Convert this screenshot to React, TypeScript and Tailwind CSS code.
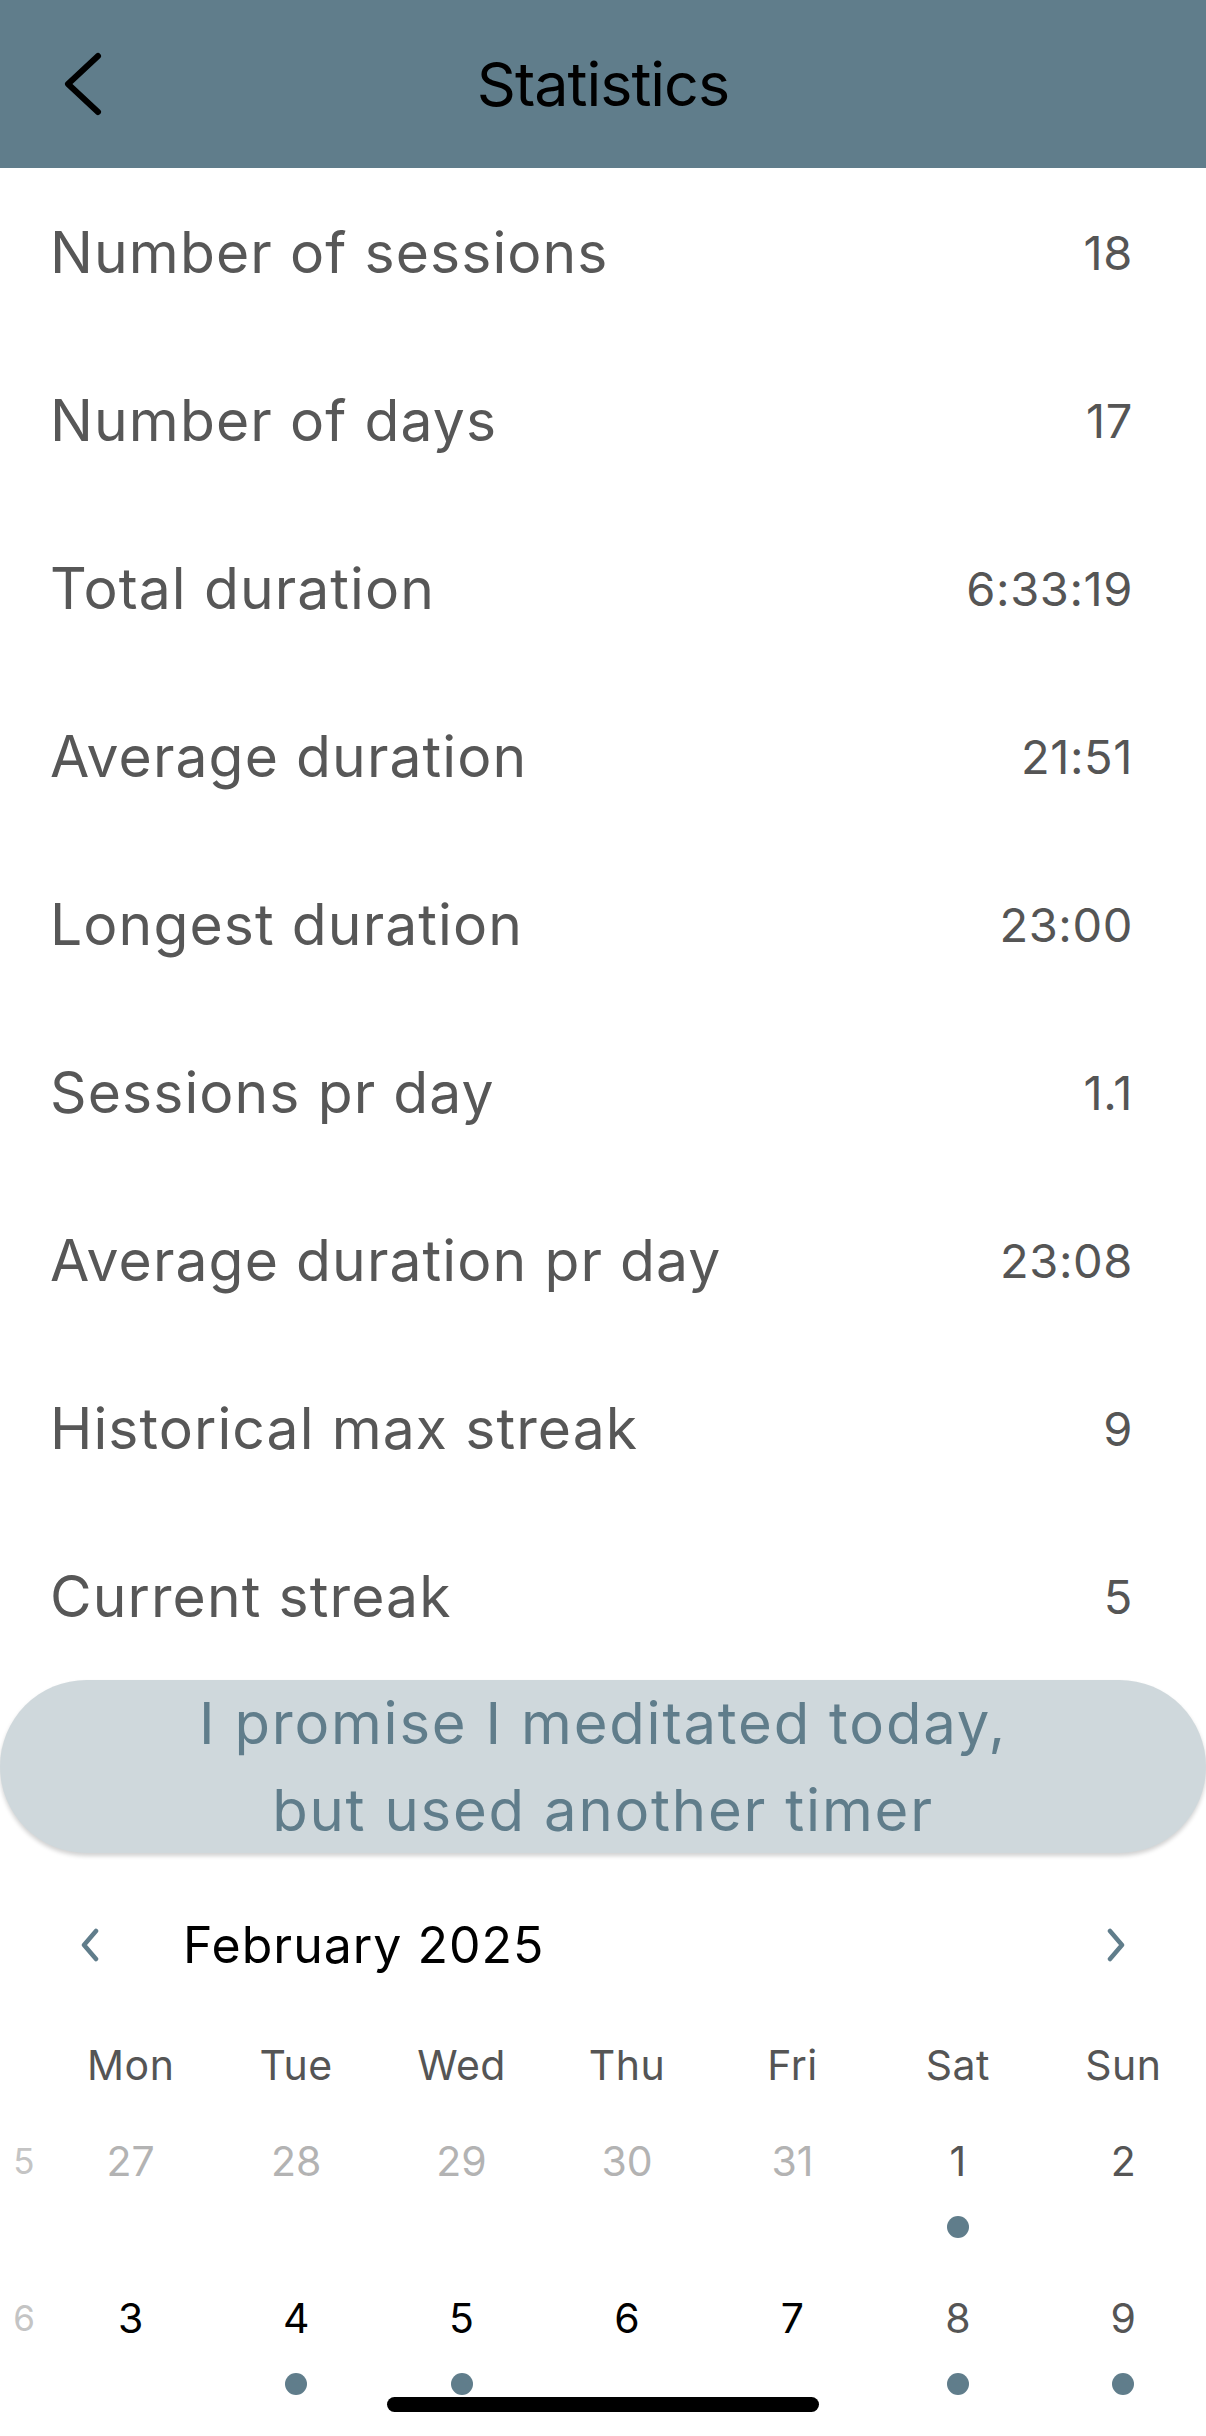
import React from "react";

const rows: [string, string][] = [
  ["Number of sessions", "18"],
  ["Number of days", "17"],
  ["Total duration", "6:33:19"],
  ["Average duration", "21:51"],
  ["Longest duration", "23:00"],
  ["Sessions pr day", "1.1"],
  ["Average duration pr day", "23:08"],
  ["Historical max streak", "9"],
  ["Current streak", "5"],
];

type Day = { n: string; tone: "muted" | "weekend" | "normal"; dot: boolean };

const weeks: { wk: string; days: Day[] }[] = [
  {
    wk: "5",
    days: [
      { n: "27", tone: "muted", dot: false },
      { n: "28", tone: "muted", dot: false },
      { n: "29", tone: "muted", dot: false },
      { n: "30", tone: "muted", dot: false },
      { n: "31", tone: "muted", dot: false },
      { n: "1", tone: "weekend", dot: true },
      { n: "2", tone: "weekend", dot: false },
    ],
  },
  {
    wk: "6",
    days: [
      { n: "3", tone: "normal", dot: false },
      { n: "4", tone: "normal", dot: true },
      { n: "5", tone: "normal", dot: true },
      { n: "6", tone: "normal", dot: false },
      { n: "7", tone: "normal", dot: false },
      { n: "8", tone: "weekend", dot: true },
      { n: "9", tone: "weekend", dot: true },
    ],
  },
];

const toneClass = {
  muted: "text-[#b3b3b3]",
  weekend: "text-[#555555]",
  normal: "text-black",
};

export default function App() {
  return (
    <div
      className="relative w-[1206px] h-[2436px] overflow-hidden bg-white"
      style={{ fontFamily: "Inter, 'Noto Sans', sans-serif" }}
    >
      {/* Header */}
      <div className="relative h-[168px] bg-[#607d8b] flex items-center justify-center">
        <svg
          className="absolute left-[62px] top-[50px]"
          width="42"
          height="68"
          viewBox="0 0 42 68"
          fill="none"
        >
          <polyline
            points="36,6 6,34 36,62"
            stroke="black"
            strokeWidth="6"
            strokeLinecap="round"
            strokeLinejoin="round"
          />
        </svg>
        <span className="text-[61px] leading-none text-black tracking-[-1px]">Statistics</span>
      </div>

      {/* Stats rows */}
      <div className="flex flex-col">
        {rows.map(([label, value]) => (
          <div key={label} className="h-[168px] flex items-center justify-between pl-[50px] pr-[73px]">
            <span className="text-[57px] leading-none text-[#575757] tracking-[1.1px]">{label}</span>
            <span className="text-[47px] leading-none text-[#555555] tracking-[0.6px]">{value}</span>
          </div>
        ))}
      </div>

      {/* Button */}
      <div className="h-[173px] rounded-full bg-[#cfd8dc] shadow-[0_3px_4px_rgba(0,0,0,0.18)] flex flex-col items-center justify-center">
        <span className="text-[58px] leading-[87px] text-[#607d8b] text-center tracking-[1.8px]">
          I promise I meditated today,
          <br />
          but used another timer
        </span>
      </div>

      {/* Calendar header */}
      <div className="mt-[32px] h-[120px] flex items-center">
        <svg className="ml-[78px]" width="24" height="34" viewBox="0 0 24 34" fill="none">
          <polyline points="18,3 6,17 18,31" stroke="#607d8b" strokeWidth="4.5" strokeLinecap="round" strokeLinejoin="round" />
        </svg>
        <span className="ml-[81px] text-[50px] leading-none text-black tracking-[1px]">February 2025</span>
        <div className="flex-1" />
        <svg className="mr-[78px]" width="24" height="34" viewBox="0 0 24 34" fill="none">
          <polyline points="6,3 18,17 6,31" stroke="#607d8b" strokeWidth="4.5" strokeLinecap="round" strokeLinejoin="round" />
        </svg>
      </div>

      {/* Weekday labels */}
      <div className="h-[120px] grid grid-cols-[48px_repeat(7,1fr)] items-center">
        <div />
        {["Mon", "Tue", "Wed", "Thu", "Fri", "Sat", "Sun"].map((d) => (
          <div key={d} className="text-center text-[41px] leading-none text-[#555555] tracking-[0.5px]">
            {d}
          </div>
        ))}
      </div>

      {/* Weeks */}
      {weeks.map((w) => (
        <div key={w.wk} className="h-[157px] grid grid-cols-[48px_repeat(7,1fr)]">
          <div className="h-[72px] flex items-center justify-center text-[35px] leading-none text-[#c4c4c4]">
            {w.wk}
          </div>
          {w.days.map((d, i) => (
            <div key={i} className="flex flex-col items-center">
              <div className={`h-[72px] flex items-center justify-center text-[41px] leading-none ${toneClass[d.tone]}`}>
                {d.n}
              </div>
              {d.dot && <div className="mt-[19px] w-[22px] h-[22px] rounded-full bg-[#607d8b]" />}
            </div>
          ))}
        </div>
      ))}

      {/* Home indicator */}
      <div className="absolute bottom-[24px] left-1/2 -translate-x-1/2 w-[432px] h-[15px] rounded-full bg-black" />
    </div>
  );
}
